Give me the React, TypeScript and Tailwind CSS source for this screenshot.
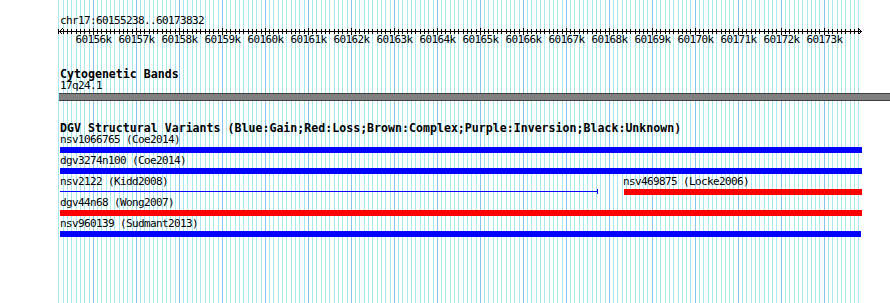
import React from "react";

// px positions of the 100bp grid, taken from the 1kb major lines (60156k at 93.3px, 43px per kb)
const ORIGIN = 93.3;
const STEP = 4.3;
const minorSteps = Array.from({ length: 187 }, (_, i) => i - 8);
const majorSteps = Array.from({ length: 18 }, (_, i) => i * 10);

const px = (m: number): number => Math.floor(ORIGIN + STEP * m);

const mono = { fontFamily: '"DejaVu Sans Mono", "Liberation Mono", monospace' };

const GridAndRuler = (): JSX.Element => (
  <svg className="absolute inset-0" width={890} height={303} shapeRendering="crispEdges">
    {minorSteps.map((m) => (
      <rect key={m} x={px(m)} y={0} width={1} height={303} fill={m % 10 === 0 ? "#88c4f0" : "#a6e8ee"} />
    ))}
    {/* ruler */}
    <rect x={59} y={31} width={803} height={1} fill="#000" />
    {minorSteps.map((m) => (
      <rect key={`t${m}`} x={px(m)} y={m % 10 === 0 ? 28 : 29} width={1} height={m % 10 === 0 ? 7 : 5} fill="#000" />
    ))}
    <path d="M59.5 31.5 L62.5 28.5 M59.5 31.5 L62.5 34.5 M861.5 31.5 L858.5 28.5 M861.5 31.5 L858.5 34.5" stroke="#000" strokeWidth={1} fill="none" />
    {majorSteps.map((m, i) => (
      <text
        key={`l${m}`}
        x={px(m) + 0.5}
        y={43}
        textAnchor="middle"
        fontSize={11}
        letterSpacing={-0.62}
        fill="#000"
        style={mono}
      >
        {`${60156 + i}k`}
      </text>
    ))}
  </svg>
);

const Label = ({ children, className = "" }: { children: React.ReactNode; className?: string }): JSX.Element => (
  <div className={`h-[12px] text-[11px] leading-[12px] tracking-[-0.62px] text-black whitespace-nowrap ${className}`} style={mono}>
    {children}
  </div>
);

const Title = ({ children, className = "" }: { children: React.ReactNode; className?: string }): JSX.Element => (
  <div className={`h-[12px] text-[11.6px] leading-[12px] font-bold text-black whitespace-nowrap ${className}`} style={mono}>
    {children}
  </div>
);

const Variant = ({ name, color, width = 802 }: { name: string; color: string; width?: number }): JSX.Element => (
  <div className="flex flex-col">
    <Label>{name}</Label>
    <div className={`mt-px h-[6px] ${color}`} style={{ width }} />
  </div>
);

export default function App(): JSX.Element {
  return (
    <div className="relative w-[890px] h-[303px] overflow-hidden bg-white">
      <GridAndRuler />
      <div className="relative flex flex-col pl-[60px]">
        <Label className="mt-[15px]">chr17:60155238..60173832</Label>

        <Title className="mt-[41px]">Cytogenetic Bands</Title>
        <Label>17q24.1</Label>
        <div className="mt-px -ml-px h-[8px] w-[831px] border-y border-[#404040] bg-[#808080]" />

        <Title className="mt-[21px]">DGV Structural Variants (Blue:Gain;Red:Loss;Brown:Complex;Purple:Inversion;Black:Unknown)</Title>
        <div className="flex flex-col gap-[2px]">
          <Variant name="nsv1066765 (Coe2014)" color="bg-[#0000ff]" />
          <Variant name="dgv3274n100 (Coe2014)" color="bg-[#0000ff]" />
          <div className="flex">
            <div className="flex w-[538px] flex-col">
              <Label>nsv2122 (Kidd2008)</Label>
              <div className="mt-px flex h-[6px] items-start">
                <div className="mt-[2px] h-px flex-1 bg-[#0000ff]" />
                <div className="h-[5px] w-px bg-[#0000ff]" />
              </div>
            </div>
            <div className="ml-[26px] flex w-[238px] flex-col">
              <Label className="-ml-px">nsv469875 (Locke2006)</Label>
              <div className="mt-px h-[6px] bg-[#ff0000]" />
            </div>
          </div>
          <Variant name="dgv44n68 (Wong2007)" color="bg-[#ff0000]" />
          <Variant name="nsv960139 (Sudmant2013)" color="bg-[#0000ff]" width={801} />
        </div>
      </div>
    </div>
  );
}
